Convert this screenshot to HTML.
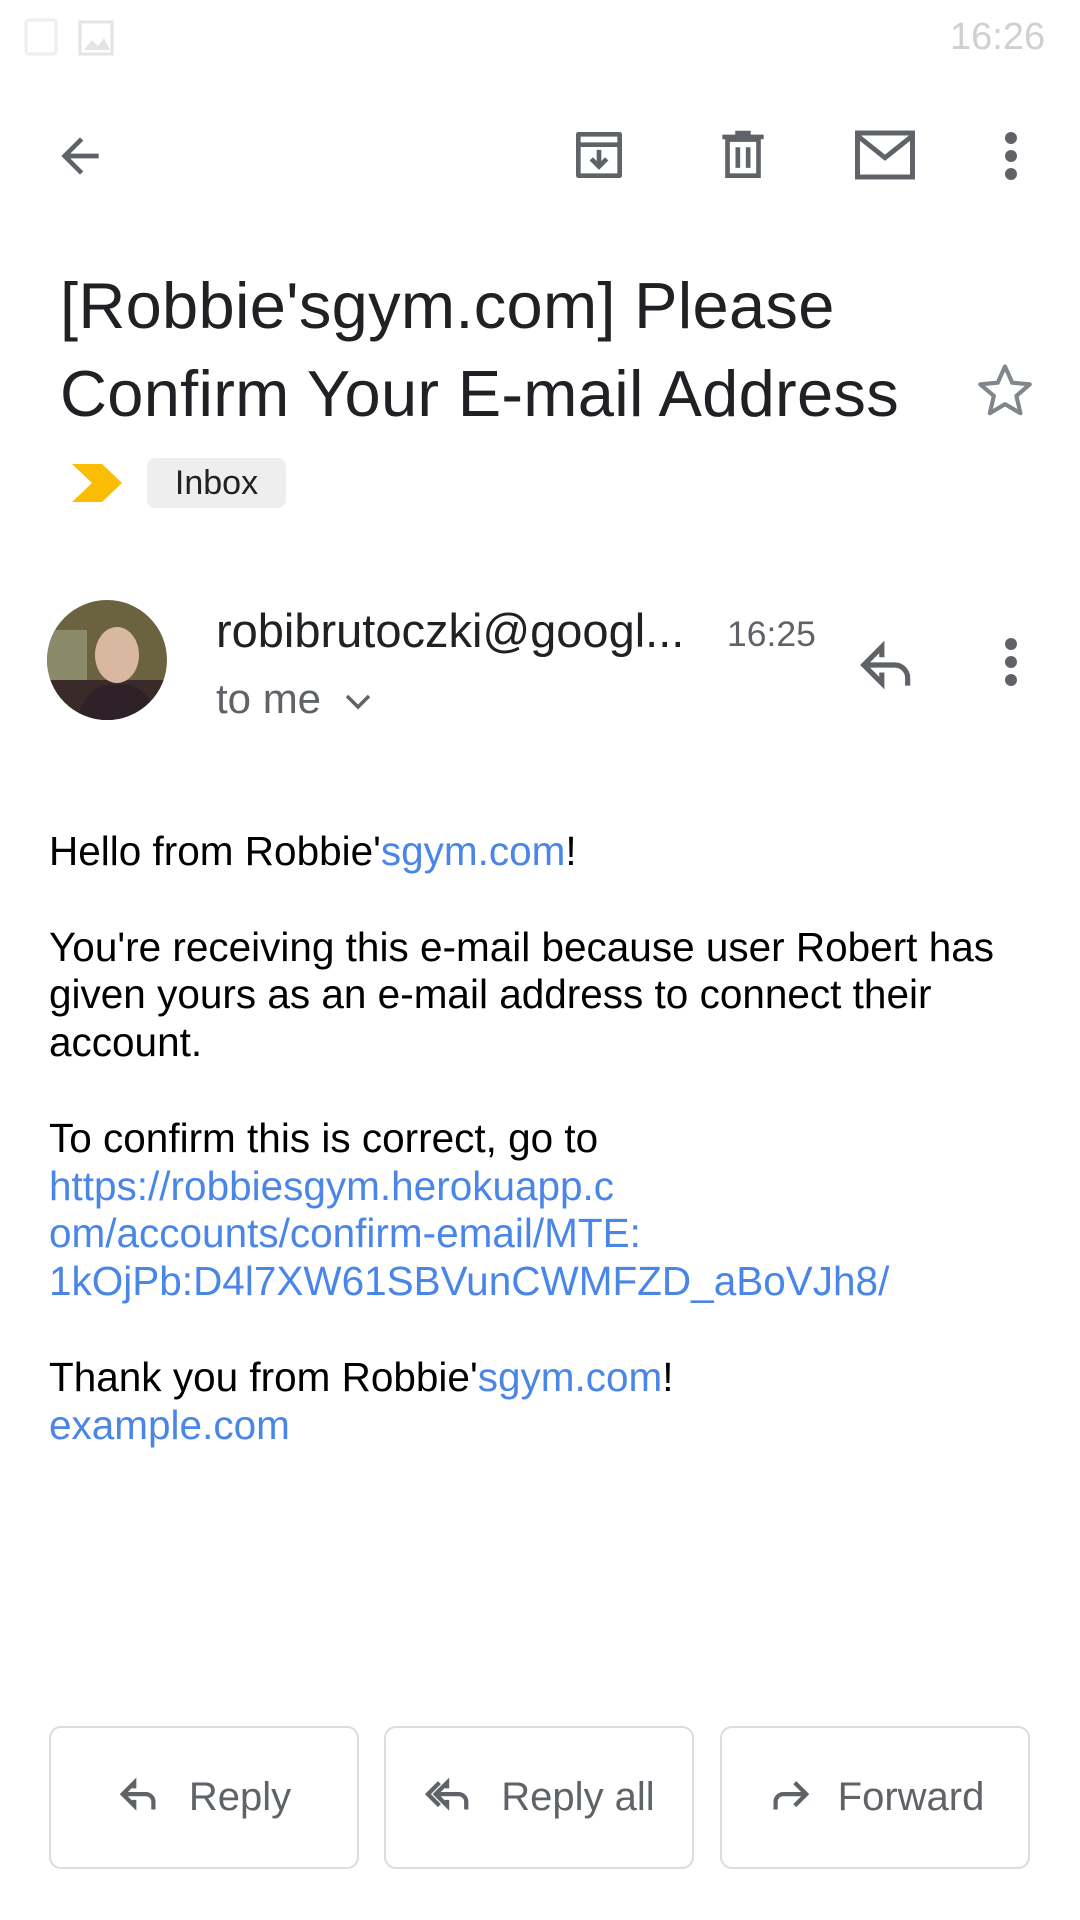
<!DOCTYPE html>
<html><head><meta charset="utf-8"><style>
*{margin:0;padding:0;box-sizing:border-box}
body{width:1080px;height:1920px;background:#fff;font-family:"Liberation Sans",Roboto,sans-serif;position:relative;overflow:hidden;color:#202124}
.a{position:absolute}
.t{white-space:nowrap}
.body{left:49px;font-size:40.5px;color:#000;white-space:nowrap}
.body a{color:#4a86e8;text-decoration:none}
.btn{position:absolute;top:1726px;height:143px;width:310px;border:2.5px solid #dadce0;border-radius:12px;display:flex;align-items:center;justify-content:center;font-size:40px;color:#5f6368}
.btn svg{margin-right:26px}
</style></head><body>
<svg class="a" style="left:24px;top:18px" width="100" height="40"><rect x="2" y="2" width="30" height="34" rx="3" fill="none" stroke="#eee" stroke-width="3"/><rect x="56" y="4" width="32" height="32" fill="none" stroke="#e4e4e4" stroke-width="3"/><path d="M60 32 L68 22 L74 28 L80 20 L86 32Z" fill="#e4e4e4"/></svg>
<div class="a t" style="left:950px;top:16px;font-size:38px;color:#d0d0d0">16:26</div>
<svg class="a" style="left:52px;top:128px" width="56" height="56" viewBox="0 0 24 24"><path d="M20 11H7.830l5.59-5.59L12 4l-8 8 8 8 1.41-1.41L7.83 13H20v-2z" fill="#5f6368"/></svg>
<svg class="a" style="left:568px;top:124px" width="62" height="62" viewBox="0 0 24 24"><path d="M4 4h16v16H4z M4 8h16" fill="none" stroke="#5f6368" stroke-width="1.8" stroke-linejoin="round"/><path d="M12 10v6 M9 13.5l3 3 3-3" fill="none" stroke="#5f6368" stroke-width="1.8"/></svg>
<svg class="a" style="left:712px;top:124px" width="62" height="62" viewBox="0 0 24 24"><path d="M6 6h12v14H6z M4 5h16 M9 3.5h6 M10 9v8 M14 9v8" fill="none" stroke="#5f6368" stroke-width="1.8"/></svg>
<svg class="a" style="left:852px;top:124px" width="66" height="62" viewBox="0 0 24 22"><rect x="2" y="3" width="20" height="16" fill="none" stroke="#5f6368" stroke-width="1.8"/><path d="M2 4l10 8 10-8" fill="none" stroke="#5f6368" stroke-width="1.8"/></svg>
<svg class="a" style="left:998px;top:128px" width="26" height="56"><circle cx="13" cy="10" r="6" fill="#5f6368"/><circle cx="13" cy="28" r="6" fill="#5f6368"/><circle cx="13" cy="46" r="6" fill="#5f6368"/></svg>
<div class="a t" style="left:60px;top:262px;font-size:65px;line-height:88px;color:#202124;letter-spacing:0.3px">[Robbie'sgym.com] Please<br>Confirm Your E-mail Address</div>
<svg class="a" style="left:974px;top:360px" width="62" height="62" viewBox="0 0 24 24"><path d="M12 2.5l2.8 6.3 6.8.6-5.2 4.5 1.6 6.7L12 17.1l-5.9 3.5 1.6-6.7L2.4 9.4l6.8-.6z" fill="none" stroke="#80868b" stroke-width="1.6" stroke-linejoin="round"/></svg>
<svg class="a" style="left:70px;top:462px" width="54" height="42"><path d="M2 2h30l20 19-20 19H2l20-19z" fill="#fbbc04"/></svg>
<div class="a t" style="left:147px;top:458px;width:139px;height:50px;background:#eeeeee;border-radius:8px;font-size:34px;line-height:50px;text-align:center;color:#202124">Inbox</div>
<svg class="a" style="left:47px;top:600px" width="120" height="120"><defs><clipPath id="c"><circle cx="60" cy="60" r="60"/></clipPath></defs><g clip-path="url(#c)"><rect width="120" height="120" fill="#6b6340"/><rect x="0" y="30" width="40" height="50" fill="#8a8a6a"/><rect x="0" y="80" width="120" height="40" fill="#3a2a2a"/><ellipse cx="70" cy="55" rx="22" ry="28" fill="#d8b8a0"/><path d="M30 120 Q40 80 70 85 Q100 80 110 120Z" fill="#2e2228"/></g></svg>
<div class="a t" style="left:216px;top:603px;font-size:47px;color:#202124">robibrutoczki@googl...</div>
<div class="a t" style="left:727px;top:614px;font-size:35.5px;color:#5f6368">16:25</div>
<div class="a t" style="left:216px;top:675px;font-size:42px;color:#5f6368">to me</div>
<svg class="a" style="left:344px;top:692px" width="28" height="20"><path d="M3 4l11 11 11-11" fill="none" stroke="#5f6368" stroke-width="3.5"/></svg>
<svg class="a" style="left:856px;top:634px" width="62" height="62" viewBox="0 0 24 24"><path d="M10 9V5l-7 7 7 7v-4.1 M3.5 12H15a5 5 0 0 1 5 5v3" fill="none" stroke="#5f6368" stroke-width="2"/></svg>
<svg class="a" style="left:998px;top:634px" width="26" height="56"><circle cx="13" cy="10" r="6" fill="#5f6368"/><circle cx="13" cy="28" r="6" fill="#5f6368"/><circle cx="13" cy="46" r="6" fill="#5f6368"/></svg>
<div class="a body" style="top:828px;line-height:47.8px">Hello from Robbie'<a>sgym.com</a>!<br><br>You're receiving this e-mail because user Robert has<br>given yours as an e-mail address to connect their<br>account.<br><br>To confirm this is correct, go to<br><a>https://robbiesgym.herokuapp.c<br>om/accounts/confirm-email/MTE:<br>1kOjPb:D4l7XW61SBVunCWMFZD_aBoVJh8/</a><br><br>Thank you from Robbie'<a>sgym.com</a>!<br><a>example.com</a></div>
<div class="btn" style="left:49px"><svg width="46" height="46" viewBox="0 0 24 24"><path d="M9 7V4L3 10l6 6v-3 M3.8 10H15a4 4 0 0 1 4 4v4" fill="none" stroke="#5f6368" stroke-width="2.2"/></svg>Reply</div>
<div class="btn" style="left:384px"><svg width="52" height="46" viewBox="0 0 26 24"><path d="M8 4L2 10l6 6 M12 7V4L6 10l6 6v-3 M6.8 10H18a4 4 0 0 1 4 4v4" fill="none" stroke="#5f6368" stroke-width="2.2"/></svg>Reply all</div>
<div class="btn" style="left:720px"><svg width="46" height="46" viewBox="0 0 24 24"><path d="M15 4l6 6-6 6 M20.2 10H9a4 4 0 0 0-4 4v4" fill="none" stroke="#5f6368" stroke-width="2.2"/></svg>Forward</div>
</body></html>
